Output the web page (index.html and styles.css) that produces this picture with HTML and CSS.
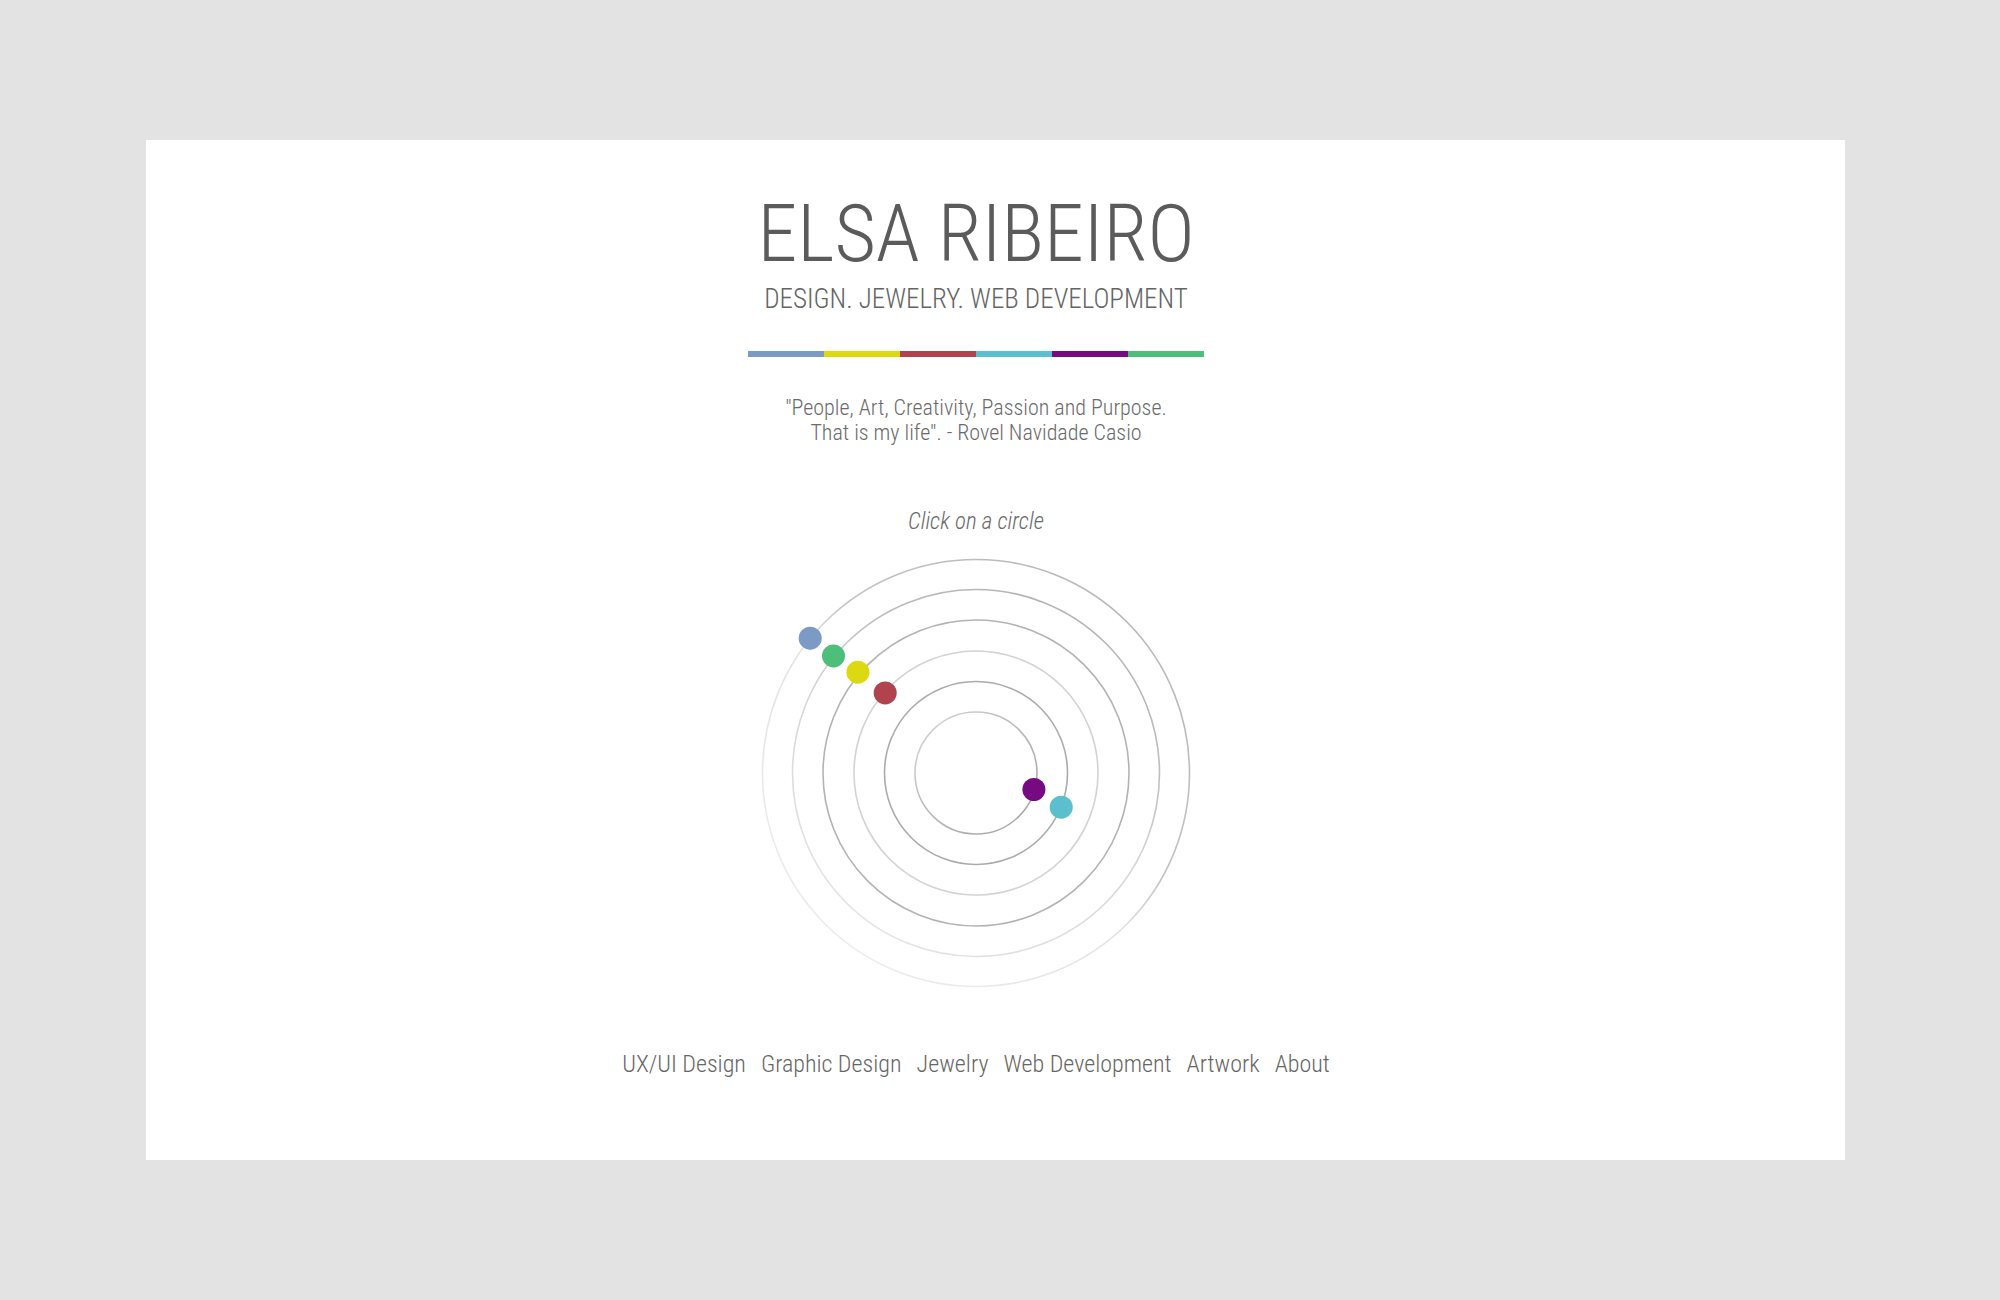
FILE: index.html
```html
<!DOCTYPE html>
<html lang="en">
<head>
<meta charset="utf-8">
<title>Elsa Ribeiro</title>
<link rel="stylesheet" href="styles.css">
</head>
<body>
<main class="card">
  <header class="head">
    <h1 class="name">ELSA RIBEIRO</h1>
    <p class="tagline">DESIGN. JEWELRY. WEB DEVELOPMENT</p>
    <div class="bar">
      <span class="seg c-blue"></span><span class="seg c-yellow"></span><span class="seg c-red"></span><span class="seg c-cyan"></span><span class="seg c-purple"></span><span class="seg c-green"></span>
    </div>
    <p class="quote">"People, Art, Creativity, Passion and Purpose.<br>That is my life". - Rovel Navidade Casio</p>
  </header>
  <p class="hint">Click on a circle</p>
  <svg class="orbits" width="440" height="440" viewBox="0 0 440 440">
    <defs>
      <linearGradient id="g6" gradientUnits="userSpaceOnUse" x1="80" y1="380" x2="360" y2="60">
        <stop offset="0" stop-color="#ececec"/>
        <stop offset="0.45" stop-color="#e2e2e2"/>
        <stop offset="0.6" stop-color="#c4c4c4"/>
        <stop offset="1" stop-color="#b8b8b8"/>
      </linearGradient>
      <linearGradient id="g5" gradientUnits="userSpaceOnUse" x1="100" y1="400" x2="300" y2="40">
        <stop offset="0" stop-color="#e6e6e6"/>
        <stop offset="0.5" stop-color="#d6d6d6"/>
        <stop offset="0.75" stop-color="#bdbdbd"/>
        <stop offset="1" stop-color="#b3b3b3"/>
      </linearGradient>
      <linearGradient id="g1" gradientUnits="userSpaceOnUse" x1="170" y1="170" x2="270" y2="270">
        <stop offset="0" stop-color="#d2d2d2"/>
        <stop offset="0.6" stop-color="#b4b4b4"/>
        <stop offset="1" stop-color="#a8a8a8"/>
      </linearGradient>
    </defs>
    <circle cx="220" cy="220" r="213.5" fill="none" stroke="url(#g6)" stroke-width="1.6"/>
    <circle cx="220" cy="220" r="183.5" fill="none" stroke="url(#g5)" stroke-width="1.6"/>
    <circle cx="220" cy="220" r="153" fill="none" stroke="#b3b3b3" stroke-width="1.6"/>
    <circle cx="220" cy="220" r="122" fill="none" stroke="#d3d3d3" stroke-width="1.6"/>
    <circle cx="220" cy="220" r="91.5" fill="none" stroke="#ababab" stroke-width="1.6"/>
    <circle cx="220" cy="220" r="61" fill="none" stroke="url(#g1)" stroke-width="1.6"/>
    <circle class="dot c-blue" cx="54.2" cy="85.2" r="11.5"/>
    <circle class="dot c-green" cx="77.5" cy="102.9" r="11.5"/>
    <circle class="dot c-yellow" cx="101.9" cy="119.2" r="11.5"/>
    <circle class="dot c-red" cx="129.2" cy="139.9" r="11.5"/>
    <circle class="dot c-purple" cx="277.9" cy="236.5" r="11.5"/>
    <circle class="dot c-cyan" cx="305.2" cy="254.2" r="11.5"/>
  </svg>
  <nav class="nav">
    <a href="#">UX/UI Design</a>
    <a href="#">Graphic Design</a>
    <a href="#">Jewelry</a>
    <a href="#">Web Development</a>
    <a href="#">Artwork</a>
    <a href="#">About</a>
  </nav>
</main>
</body>
</html>
```
FILE: styles.css
```css
html, body {
  margin: 0;
  padding: 0;
}
body {
  background: #e3e3e3;
  font-family: "Roboto Condensed", Roboto, "Liberation Sans", sans-serif;
  font-weight: 300;
  font-stretch: condensed;
  color: #666;
}
.card {
  box-sizing: border-box;
  width: 1699px;
  height: 1020px;
  margin: 140px 0 0 146px;
  padding: 54px 39px 0 0;
  background: #fff;
  display: flex;
  flex-direction: column;
  align-items: center;
}
.head {
  display: flex;
  flex-direction: column;
  align-items: center;
}
.name {
  margin: 0;
  font-size: 80px;
  line-height: 80px;
  font-weight: 300;
  color: #5b5b5b;
  letter-spacing: 0;
}
.tagline {
  margin: 10px 0 0;
  font-size: 27px;
  line-height: 30px;
  color: #646464;
}
.bar {
  display: flex;
  width: 456px;
  height: 6px;
  margin-top: 37px;
}
.seg {
  flex: 1;
}
.c-blue { background: #7b9ac4; fill: #7b9ac4; }
.c-yellow { background: #dcd910; fill: #dcd910; }
.c-red { background: #b0434e; fill: #b0434e; }
.c-cyan { background: #5bbfcd; fill: #5bbfcd; }
.c-purple { background: #760a80; fill: #760a80; }
.c-green { background: #4ebf7b; fill: #4ebf7b; }
.quote {
  margin: 38px 0 0;
  font-size: 22px;
  line-height: 25px;
  text-align: center;
  color: #6a6a6a;
}
.hint {
  margin: 63px 0 0;
  font-size: 23px;
  line-height: 27px;
  font-style: italic;
  color: #6a6a6a;
}
.orbits {
  display: block;
  margin-top: 18px;
}
.nav {
  display: flex;
  gap: 15px;
  margin-top: 57px;
  font-size: 24px;
  line-height: 28px;
}
.nav a {
  color: #666;
  text-decoration: none;
}
```
